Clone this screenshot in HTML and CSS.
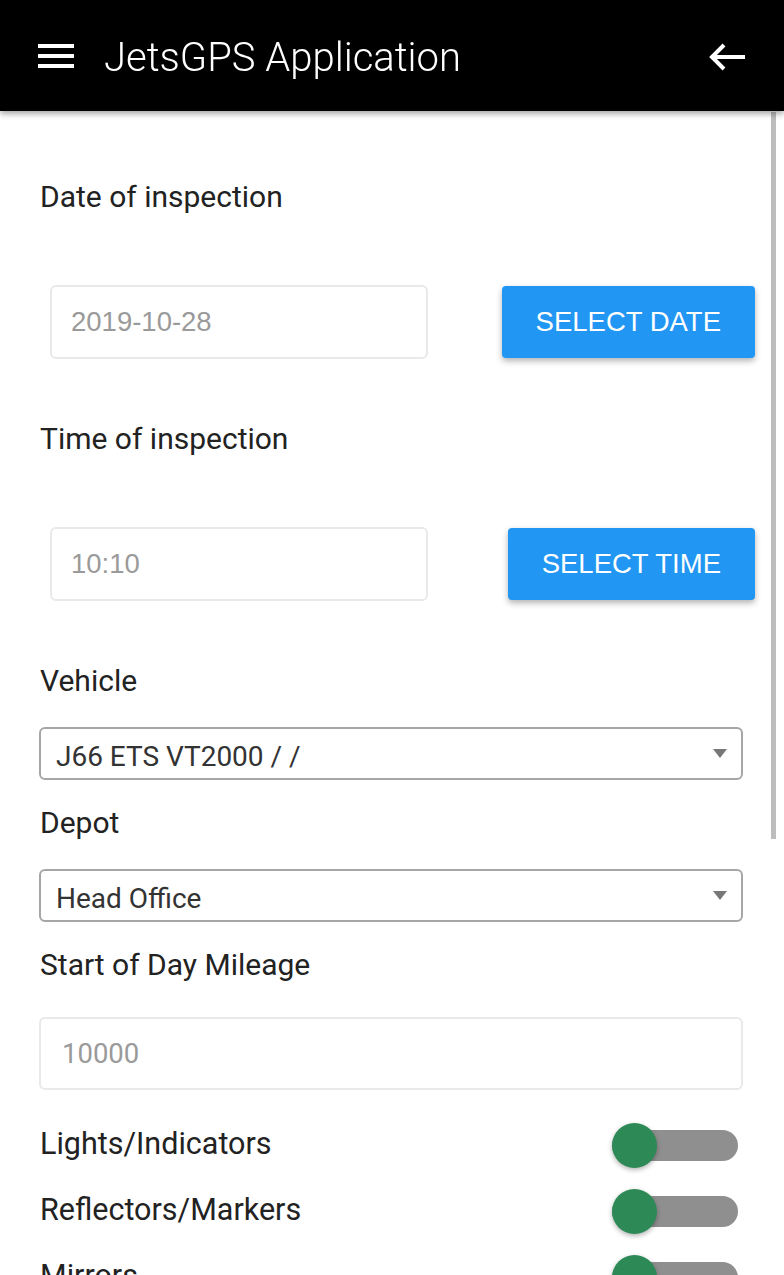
FILE: index.html
```html
<!DOCTYPE html>
<html>
<head>
    <title>JetsGPS Application</title>
    <link rel="stylesheet" href="styles.css">
</head>
<body>
    <header class="toolbar">
        <svg class="menu-icon" width="36" height="26" viewBox="0 0 36 26">
            <rect x="0" y="0" width="36" height="4" fill="#fff"/>
            <rect x="0" y="10" width="36" height="4" fill="#fff"/>
            <rect x="0" y="20" width="36" height="4" fill="#fff"/>
        </svg>
        <h1 class="title">JetsGPS Application</h1>
        <svg class="back-icon" width="38" height="28" viewBox="0 0 38 28">
            <path d="M3 14 H36 M15 2 L3 14 L15 26" stroke="#fff" stroke-width="4" fill="none"/>
        </svg>
    </header>

    <main class="form">
        <p class="field-label">Date of inspection</p>
        <div class="picker-row">
            <input class="text-box picker-input" type="text" placeholder="2019-10-28">
            <button class="btn">SELECT DATE</button>
        </div>

        <p class="field-label">Time of inspection</p>
        <div class="picker-row">
            <input class="text-box picker-input" type="text" placeholder="10:10">
            <button class="btn">SELECT TIME</button>
        </div>

        <p class="field-label">Vehicle</p>
        <div class="select-box">
            <span>J66 ETS VT2000 / /</span>
            <span class="caret"></span>
        </div>

        <p class="field-label label-tight">Depot</p>
        <div class="select-box">
            <span>Head Office</span>
            <span class="caret"></span>
        </div>

        <p class="field-label label-tight">Start of Day Mileage</p>
        <input class="text-box mileage" type="text" placeholder="10000">

        <div class="checks">
            <div class="check-row">
                <span>Lights/Indicators</span>
                <span class="toggle"><span class="knob"></span></span>
            </div>
            <div class="check-row">
                <span>Reflectors/Markers</span>
                <span class="toggle"><span class="knob"></span></span>
            </div>
            <div class="check-row">
                <span>Mirrors</span>
                <span class="toggle"><span class="knob"></span></span>
            </div>
        </div>
    </main>

    <div class="scrollbar"></div>
</body>
</html>
```

FILE: styles.css
```css
body {
    margin: 0;
    font-family: Roboto, "Liberation Sans", sans-serif;
    background-color: #fff;
    color: #222;
    overflow: hidden;
}
.toolbar {
    height: 111px;
    background-color: #000;
    display: flex;
    align-items: center;
    padding: 0 37px 0 38px;
    box-shadow: 0 3px 6px rgba(0, 0, 0, 0.35);
    position: relative;
    z-index: 2;
}
.menu-icon {
    margin-top: 2px;
}
.title {
    flex: 1;
    margin: 0 0 0 30px;
    color: #fff;
    font-size: 40px;
    font-weight: 300;
    line-height: 1;
    padding-top: 4px;
}
.back-icon {
    margin-top: 2px;
}
.form {
    padding: 66px 41px 0 39px;
}
.field-label {
    margin: 0;
    padding-left: 1px;
    font-size: 30px;
    line-height: 40px;
    color: #222;
}
.label-tight {
    margin-top: 23px;
}
.picker-row {
    display: flex;
    justify-content: space-between;
    align-items: center;
    margin: 68px -12px 60px 11px;
}
.text-box {
    box-sizing: border-box;
    height: 74px;
    border: 2px solid #e9e9e9;
    border-radius: 6px;
    background: #fff;
    outline: none;
}
.picker-input {
    width: 378px;
    padding-left: 19px;
    font-family: "Liberation Sans", Arial, sans-serif;
    font-size: 27.5px;
}
.picker-input::placeholder {
    color: #9a9a9a;
}
.btn {
    height: 72px;
    padding: 0 34px;
    border: none;
    border-radius: 4px;
    background-color: #2196f3;
    color: #fff;
    font-family: "Liberation Sans", Arial, sans-serif;
    font-size: 27.5px;
    box-shadow: 0 3px 6px rgba(0, 0, 0, 0.3);
}
.select-box {
    box-sizing: border-box;
    height: 53px;
    margin-top: 26px;
    display: flex;
    align-items: center;
    justify-content: space-between;
    padding: 5px 14px 0 15px;
    border: 2px solid #a6a6a6;
    border-radius: 6px;
    font-size: 28px;
    color: #333;
}
.caret {
    width: 0;
    height: 0;
    margin-top: -5px;
    border-left: 7px solid transparent;
    border-right: 7px solid transparent;
    border-top: 9px solid #777;
}
.mileage {
    display: block;
    width: 100%;
    height: 73px;
    margin-top: 32px;
    padding-left: 21px;
    font-family: Roboto, sans-serif;
    font-size: 27.5px;
}
.mileage::placeholder {
    color: #9a9a9a;
}
.checks {
    margin-top: 20px;
}
.check-row {
    height: 66px;
    display: flex;
    align-items: center;
    justify-content: space-between;
    padding: 0 5px 0 1px;
    font-size: 30.5px;
    color: #222;
}
.toggle {
    position: relative;
    width: 126px;
    height: 31px;
    margin-top: 5px;
    border-radius: 16px;
    background-color: #8f8f8f;
}
.knob {
    position: absolute;
    left: 0;
    top: -7px;
    width: 45px;
    height: 45px;
    border-radius: 50%;
    background-color: #2d8a57;
    box-shadow: 0 2px 5px rgba(0, 0, 0, 0.3);
}
.scrollbar {
    position: fixed;
    top: 112px;
    right: 8px;
    width: 5px;
    height: 727px;
    background-color: #bdbdbd;
}
```
